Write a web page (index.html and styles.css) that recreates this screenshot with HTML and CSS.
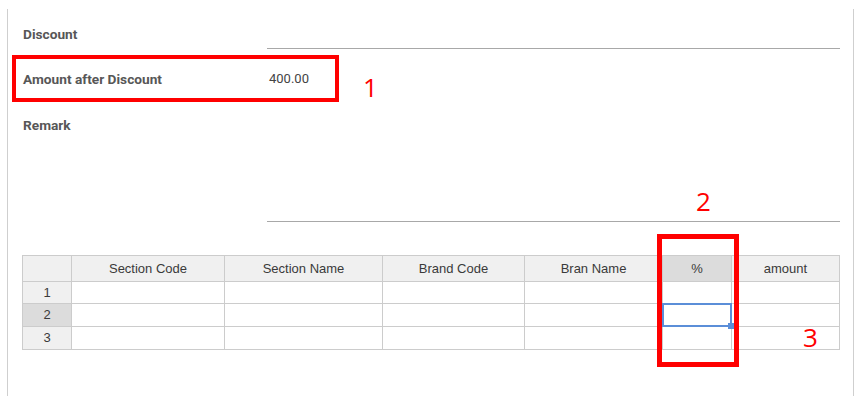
FILE: index.html
```html
<!DOCTYPE html>
<html>
<head>
<meta charset="utf-8">
<link rel="stylesheet" href="styles.css">
</head>
<body>
<div class="panel">
  <div class="form">
    <div class="field field-discount">
      <span class="label">Discount</span>
      <div class="input"></div>
    </div>
    <div class="field field-amount">
      <span class="label">Amount after Discount</span>
      <span class="value">400.00</span>
    </div>
    <div class="field field-remark">
      <span class="label">Remark</span>
      <div class="textarea"></div>
    </div>
  </div>
  <div class="sheet">
    <div class="cell head corner"></div>
    <div class="cell head">Section Code</div>
    <div class="cell head">Section Name</div>
    <div class="cell head">Brand Code</div>
    <div class="cell head">Bran Name</div>
    <div class="cell head active">%</div>
    <div class="cell head">amount</div>

    <div class="cell rowhead r1">1</div>
    <div class="cell r1"></div><div class="cell r1"></div><div class="cell r1"></div><div class="cell r1"></div><div class="cell r1"></div><div class="cell r1"></div>

    <div class="cell rowhead active r2">2</div>
    <div class="cell r2"></div><div class="cell r2"></div><div class="cell r2"></div><div class="cell r2"></div><div class="cell r2 selected"><span class="sel-border"></span><span class="sel-handle"></span></div><div class="cell r2"></div>

    <div class="cell rowhead r3">3</div>
    <div class="cell r3"></div><div class="cell r3"></div><div class="cell r3"></div><div class="cell r3"></div><div class="cell r3"></div><div class="cell r3"></div>
  </div>
</div>

<div class="mark mark-box box-1"></div>
<div class="mark mark-box box-2"></div>
<div class="mark mark-num num-1">1</div>
<div class="mark mark-num num-2">2</div>
<div class="mark mark-num num-3">3</div>
</body>
</html>
```

FILE: styles.css
```css
* { box-sizing: border-box; }

html, body {
  margin: 0;
  padding: 0;
  background: #fff;
}

body {
  font-family: Roboto, "Liberation Sans", Arial, sans-serif;
  overflow: hidden;
  height: 396px;
}

.panel {
  margin: 9px 0 0 7px;
  width: 847px;
  height: 387px;
  border-left: 1px solid #cfcfcf;
  border-right: 1px solid #cfcfcf;
}

.form {
  padding-left: 15px;
}

.field {
  display: grid;
  grid-template-columns: 244px 573px;
}

.label {
  font-family: Roboto, "Liberation Sans", sans-serif;
  font-weight: 700;
  font-size: 13.7px;
  line-height: 16px;
  color: #575757;
}

.field-discount { height: 40px; }
.field-discount .label { padding-top: 17px; }
.input {
  border-bottom: 1px solid #a8a8a8;
}

.field-amount { height: 53px; }
.field-amount .label { padding-top: 22px; }
.value {
  padding-top: 22px;
  padding-left: 2px;
  font-family: Roboto, "Liberation Sans", sans-serif;
  font-size: 13px;
  line-height: 16px;
  color: #444;
}

.field-remark { height: 120px; }
.field-remark .label { padding-top: 15px; }
.textarea {
  border-bottom: 1px solid #a8a8a8;
}

.sheet {
  margin: 33px 0 0 14px;
  display: grid;
  grid-template-columns: 49px 153px 158px 142px 138px 69px 108px;
  grid-template-rows: 26px 22px 23px 23px;
  width: 818px;
  border-left: 1px solid #ccc;
  border-top: 1px solid #ccc;
  font-family: "Liberation Sans", Arial, sans-serif;
  font-size: 13px;
  color: #3a3a3a;
}

.cell {
  border-right: 1px solid #ccc;
  border-bottom: 1px solid #ccc;
  background: #fff;
  text-align: center;
  line-height: 22px;
  position: relative;
}

.cell.head {
  background: #f0f0f0;
  line-height: 25px;
}

.cell.rowhead {
  background: #f0f0f0;
}

.cell.r1 { line-height: 21px; }

.cell.active {
  background: #dcdcdc;
}

.cell.selected {
  z-index: 2;
}

.sel-border {
  position: absolute;
  left: -1px;
  top: -1px;
  width: 70px;
  height: 24px;
  border: 2px solid #5b8ed8;
}

.sel-handle {
  position: absolute;
  left: 65px;
  top: 19px;
  width: 6px;
  height: 6px;
  background: #5b8ed8;
}

.mark {
  position: absolute;
  z-index: 5;
}

.mark-box {
  border: 4px solid #ff0000;
}

.box-1 {
  left: 12px;
  top: 55px;
  width: 327px;
  height: 47px;
}

.box-2 {
  left: 657px;
  top: 234px;
  width: 82px;
  height: 133px;
  border-width: 5px;
}

.mark-num {
  font-family: "Open Sans", "Liberation Sans", sans-serif;
  font-size: 26px;
  line-height: 26px;
  color: #ff0000;
}

.num-1 { left: 363px; top: 74px; }
.num-2 { left: 696px; top: 188px; }
.num-3 { left: 803px; top: 324px; }
```
